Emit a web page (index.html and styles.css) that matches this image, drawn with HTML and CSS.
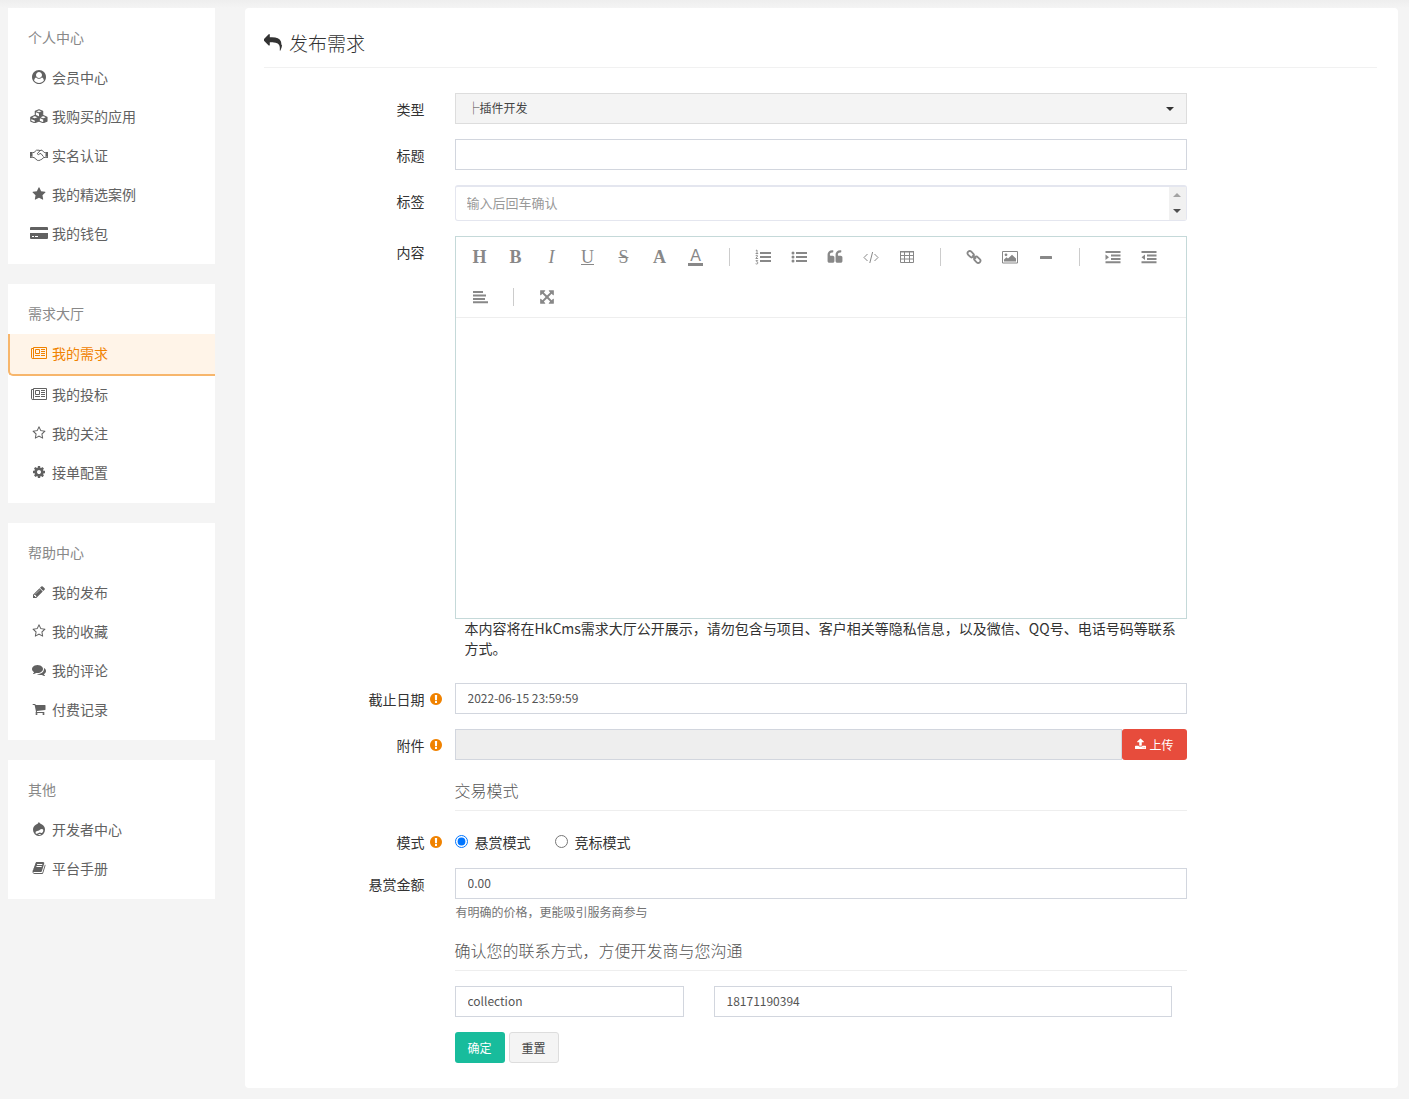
FILE: index.html
```html
<!DOCTYPE html>
<html lang="zh-CN">
<head>
<meta charset="utf-8">
<meta name="viewport" content="width=device-width, initial-scale=1">
<title>发布需求</title>
<link rel="stylesheet" href="styles.css">
</head>
<body>
<svg class="sprite" aria-hidden="true">
  <symbol id="i-user" viewBox="0 0 1792 1792"><path d="M1523 1339q-22-155-87.500-257.500t-184.500-118.500q-67 74-159.500 115.500t-195.500 41.500-195.500-41.500-159.500-115.500q-119 16-184.500 118.500t-87.500 257.500q106 150 271 237.500t356 87.500 356-87.500 271-237.500zm-243-699q0-159-112.500-271.500t-271.500-112.500-271.500 112.500-112.500 271.500 112.500 271.500 271.500 112.500 271.500-112.500 112.500-271.500zm512 256q0 182-71 347.500t-190.500 286-285.500 191.500-349 71-348-71-286-191-191-286-71-348 71-348 191-286 286-191 348-71 348 71 286 191 191 286 71 348z"/></symbol>
  <symbol id="i-cubes" viewBox="0 0 18 14"><g fill="none" stroke="currentColor" stroke-width="1.100" stroke-linejoin="round"><path d="M9 .7 12.700 2.300V6.200L9 7.900 5.300 6.200V2.300ZM5.300 2.300 9 4l3.700-1.700M4.700 6.600 8.600 8.300v3.900L4.700 13.700.8 12.200V8.300ZM.8 8.300 4.700 10l3.900-1.700M13.200 6.600 17 8.300v3.900l-3.800 1.500-3.900-1.500V8.300ZM9.300 8.300 13.200 10 17 8.300"/></g><path d="M9 4v3.900l3.700-1.700V2.300ZM4.700 10v3.700l3.900-1.500V8.300ZM13.200 10v3.700L17 12.200V8.300ZM.8 8.300 4.700 10v1.500L.8 10Z"/></symbol>
  <symbol id="i-hands" viewBox="0 0 18 14"><path d="M0 4h2.500v6H0ZM15.500 4H18v6h-2.500ZM.8 8.500v.8h.8v-.8ZM16.400 8.500v.8h.8v-.8Z" fill-rule="evenodd"/><path d="M2.500 4.500H4L6.500 2.200H9L10 2.700 11 2.200h1L14.200 4.500h1.300M10 2.700 7.200 5.800q.8 1.800 2.800-.2h1L13.500 8.700M2.500 9.500H4L7.300 12.300q.9.600 1.600 0 1.300.4 1.800-.6 1.300.1 1.500-1.100 1.200 0 1.300-1.100h2" fill="none" stroke="currentColor"/></symbol>
  <symbol id="i-star" viewBox="0 0 1792 1792"><path d="M1728 647q0 22-26 48l-363 354 86 500q1 7 1 20 0 21-10.500 35.500t-30.500 14.500q-19 0-40-12l-449-236-449 236q-22 12-40 12-21 0-31.500-14.500t-10.500-35.500q0-6 2-20l86-500-364-354q-25-27-25-48 0-37 56-46l502-73 225-455q19-41 49-41t49 41l225 455 502 73q56 9 56 46z"/></symbol>
  <symbol id="i-star-o" viewBox="0 0 1792 1792"><path d="M1201 1004l306-297-422-62-189-382-189 382-422 62 306 297-73 421 378-199 377 199zm527-357q0 22-26 48l-363 354 86 500q1 7 1 20 0 50-41 50-19 0-40-12l-449-236-449 236q-22 12-40 12-21 0-31.500-14.500t-10.500-35.500q0-6 2-20l86-500-364-354q-25-27-25-48 0-37 56-46l502-73 225-455q19-41 49-41t49 41l225 455 502 73q56 9 56 46z"/></symbol>
  <symbol id="i-card" viewBox="0 0 18 14"><path fill-rule="evenodd" d="M1 1h16q1 0 1 1v2H0V2q0-1 1-1ZM0 7h18v5q0 1-1 1H1q-1 0-1-1ZM2 10v1h2v-1ZM5 10v1h3v-1Z"/></symbol>
  <symbol id="i-news" viewBox="0 0 18 14"><path fill="none" stroke="currentColor" d="M3.500 1.500h13v11H2.700q-1.200 0-1.200-1.200V2.500h2M3.500 1.500v9.800q0 1-.9 1.200M5.500 3.500h4v4h-4ZM5 9.500h5M11 3.500h4M11 5.500h4M11 7.500h4M11 9.500h4"/></symbol>
  <symbol id="i-cog" viewBox="0 0 1792 1792"><path d="M1152 896q0-106-75-181t-181-75-181 75-75 181 75 181 181 75 181-75 75-181zm512-109v222q0 12-8 23t-20 13l-185 28q-19 54-39 91 35 50 107 138 10 12 10 25t-9 23q-27 37-99 108t-94 71q-12 0-26-9l-138-108q-44 23-91 38-16 136-29 186-7 28-36 28h-222q-14 0-24.500-8.500t-11.500-21.500l-28-184q-49-16-90-37l-141 107q-10 9-25 9-14 0-25-11-126-114-165-168-7-10-7-23 0-12 8-23 15-21 51-66.500t54-70.500q-27-50-41-99l-183-27q-13-2-21-12.500t-8-23.500v-222q0-12 8-23t19-13l186-28q14-46 39-92-40-57-107-138-10-12-10-24 0-10 9-23 26-36 98.500-107.500t94.500-71.500q13 0 26 10l138 107q44-23 91-38 16-136 29-186 7-28 36-28h222q14 0 24.500 8.500t11.500 21.500l28 184q49 16 90 37l142-107q9-9 24-9 13 0 25 10 129 119 165 170 7 8 7 22 0 12-8 23-15 21-51 66.500t-54 70.500q26 50 41 98l183 28q13 2 21 12.500t8 23.500z"/></symbol>
  <symbol id="i-pencil" viewBox="0 0 1792 1792"><path d="M491 1536l91-91-235-235-91 91v107h128v128h107zm523-928q0-22-22-22-10 0-17 7l-542 542q-7 7-7 17 0 22 22 22 10 0 17-7l542-542q7-7 7-17zm-54-192l416 416-832 832h-416v-416zm683 96q0 53-37 90l-166 166-416-416 166-165q36-38 90-38 53 0 91 38l235 234q37 39 37 91z"/></symbol>
  <symbol id="i-comments" viewBox="0 0 1792 1792"><path d="M1408 768q0 139-94 257t-256.500 186.500-353.500 68.500q-86 0-176-16-124 88-278 128-36 9-86 16h-3q-11 0-20.500-8t-11.500-21q-1-3-1-6.500t.5-6.500 2-6l2.500-5 3.500-5.500 4-5 4.500-5 4-4.500q5-6 23-25t26-29.500 22.500-29 25-38.500 20.500-44q-124-72-195-177t-71-224q0-139 94-257t256.500-186.500 353.500-68.500 353.500 68.500 256.500 186.500 94 257zm384 256q0 120-71 224.500t-195 176.500q10 24 20.500 44t25 38.500 22.500 29 26 29.500 23 25q1 1 4 4.500t4.500 5 4 5 3.500 5.500l2.500 5 2 6 .5 6.500-1 6.500q-3 14-13 22t-22 7q-50-7-86-16-154-40-278-128-90 16-176 16-271 0-472-132 58 4 88 4 161 0 309-45t264-129q125-92 192-212t67-254q0-77-23-152 129 71 204 178t75 230z"/></symbol>
  <symbol id="i-cart" viewBox="0 0 1792 1792"><path d="M704 1536q0 52-38 90t-90 38-90-38-38-90 38-90 90-38 90 38 38 90zm896 0q0 52-38 90t-90 38-90-38-38-90 38-90 90-38 90 38 38 90zm128-1088v512q0 24-16.500 42.500t-40.500 21.500l-1044 122q13 60 13 70 0 16-24 64h920q26 0 45 19t19 45-19 45-45 19h-1024q-26 0-45-19t-19-45q0-11 8-31.500t16-36 21.500-40 15.500-29.500l-177-823h-204q-26 0-45-19t-19-45 19-45 45-19h256q16 0 28.500 6.500t19.500 15.500 13 24.500 8 26 5.500 29.500 4.500 26h1201q26 0 45 19t19 45z"/></symbol>
  <symbol id="i-drupal" viewBox="0 0 14 14"><path d="M6.800 0Q8 1.500 10 2.600q3 1.700 3 5.200 0 2.700-1.800 4.400T7 14t-4.200-1.800T1 7.800Q1 4.400 4.200 2.600 6.400 1.500 6.800 0Z"/><path d="M3.600 11.200q-.6-2 1.400-2.300 1.300 0 2.300-.7 1.600-1.400 2.900-1.200 1.600.6 1 2.300-.8 2.300-2 1.700Q7.800 9.900 6.600 11q-2 1.500-3 .2ZM6 12.500q1.700-1.200 3.200 0-1.700 1-3.200 0Z" fill="#fff"/></symbol>
  <symbol id="i-book" viewBox="0 0 1792 1792"><path d="M1703 478q40 57 18 129l-275 906q-19 64-76.500 107.500t-122.500 43.500h-923q-77 0-148.500-53.500t-99.500-131.500q-24-67-2-127 0-4 3-27t4-37q1-8-3-21.500t-3-19.500q2-11 8-21t16.500-23.500 16.500-23.500q23-38 45-91.500t30-91.500q3-10 .5-30t-.5-28q3-11 17-28t17-23q21-36 42-92t25-90q1-9-2.500-32t.5-28q4-13 22-30.500t22-22.500q19-26 42.500-84.500t27.500-96.500q1-8-3-25.500t-2-26.500q2-8 9-18t18-23 17-21q8-12 16.500-30.500t15-35 16-36 19.500-32 26.500-23.500 36-11.500 47.500 5.500l-1 3q38-9 51-9h761q74 0 114 56t18 130l-274 906q-36 119-71.500 153.500t-128.500 34.500h-869q-27 0-38 15-11 16-1 43 24 70 144 70h923q29 0 56-15.500t35-41.500l300-987q7-22 5-57 38 15 59 43zm-1064 2q-4 13 2 22.500t20 9.500h608q13 0 25.500-9.500t16.500-22.500l21-64q4-13-2-22.500t-20-9.500h-608q-13 0-25.500 9.500t-16.500 22.500zm-83 256q-4 13 2 22.500t20 9.500h608q13 0 25.500-9.500t16.500-22.500l21-64q4-13-2-22.500t-20-9.500h-608q-13 0-25.500 9.500t-16.500 22.500z"/></symbol>
  <symbol id="i-reply" viewBox="0 0 1792 1792"><path d="M1792 1120q0 166-127 451-3 7-10.500 24t-13.500 30-13 22q-12 17-28 17-15 0-23.500-10t-8.500-25q0-9 2.500-26.500t2.500-23.500q5-68 5-123 0-112-19.500-200.500t-54-153.500-89-112-117-80-145.500-47-165.500-23.500-187.500-6.500h-224v256q0 26-19 45t-45 19-45-19l-512-512q-19-19-19-45t19-45l512-512q19-19 45-19t45 19 19 45v256h224q713 0 875 403 53 134 53 333z"/></symbol>
  <symbol id="i-alert" viewBox="0 0 1792 1792"><path d="M896 128q209 0 385.500 103t279.500 279.500 103 385.500-103 385.500-279.500 279.500-385.500 103-385.500-103-279.500-279.500-103-385.500 103-385.500 279.500-279.500 385.500-103zm128 1247v-190q0-14-9-23.500t-22-9.500h-192q-13 0-23 10t-10 23v190q0 13 10 23t23 10h192q13 0 22-9.500t9-23.500zm-2-344l18-621q0-12-10-18-10-8-24-8h-220q-14 0-24 8-10 6-10 18l17 621q0 10 10 17.500t24 7.500h185q14 0 23.500-7.500t10.500-17.500z"/></symbol>
  <symbol id="i-upload" viewBox="64 0 1664 1792"><path d="M1344 1472q0-26-19-45t-45-19-45 19-19 45 19 45 45 19 45-19 19-45zm256 0q0-26-19-45t-45-19-45 19-19 45 19 45 45 19 45-19 19-45zm128-224v320q0 40-28 68t-68 28h-1472q-40 0-68-28t-28-68v-320q0-40 28-68t68-28h427q21 56 70.500 92t110.500 36h256q61 0 110.500-36t70.500-92h427q40 0 68 28t28 68zm-325-648q-17 40-59 40h-256v448q0 26-19 45t-45 19h-256q-26 0-45-19t-19-45v-448h-256q-42 0-59-40-17-39 14-69l448-448q18-19 45-19t45 19l448 448q31 30 14 69z"/></symbol>
  <symbol id="i-ol" viewBox="0 0 16 16"><path d="M5 3h11v2H5ZM5 7h11v2H5ZM5 11h11v2H5Z"/><path fill="none" stroke="currentColor" stroke-width=".9" d="M.8 1.600 2 1v3.500M.6 4.500h2.600M.7 6.600q1.900-1 1.900.4L.8 9.500h2.300M.7 11.600h2L1.600 12.800q2 .5 1 1.900-.8.600-2 0"/></symbol>
  <symbol id="i-ul" viewBox="0 0 16 16"><path d="M5 3h11v2H5ZM5 7h11v2H5ZM5 11h11v2H5Z"/><circle cx="2" cy="4" r="1.500"/><circle cx="2" cy="8" r="1.500"/><circle cx="2" cy="12" r="1.500"/></symbol>
  <symbol id="i-quote" viewBox="0 0 1792 1792"><path d="M832 960v384q0 80-56 136t-136 56h-384q-80 0-136-56t-56-136v-704q0-104 40.500-198.500t109.500-163.500 163.500-109.500 198.500-40.500h64q26 0 45 19t19 45v128q0 26-19 45t-45 19h-64q-106 0-181 75t-75 181v32q0 40 28 68t68 28h224q80 0 136 56t56 136zm896 0v384q0 80-56 136t-136 56h-384q-80 0-136-56t-56-136v-704q0-104 40.500-198.500t109.500-163.500 163.500-109.500 198.500-40.500h64q26 0 45 19t19 45v128q0 26-19 45t-45 19h-64q-106 0-181 75t-75 181v32q0 40 28 68t68 28h224q80 0 136 56t56 136z"/></symbol>
  <symbol id="i-code" viewBox="0 0 16 16"><path fill="none" stroke="currentColor" d="M4.500 5 1 8.500 4.500 12M11.500 5 15 8.500 11.500 12M9.600 3 6.800 14"/></symbol>
  <symbol id="i-table" viewBox="0 0 16 16"><path fill="none" stroke="currentColor" d="M1.500 2.500h13v11h-13ZM1.500 6.500h13M1.500 10h13M5.500 3v11M10.500 3v11"/><path d="M1 2h14v1.500H1Z"/></symbol>
  <symbol id="i-link" viewBox="0 0 16 16"><g fill="none" stroke="currentColor" stroke-width="1.800"><rect x="1.200" y="3" width="7" height="4.400" rx="2.200" transform="rotate(45 4.700 5.200)"/><rect x="7.800" y="8.600" width="7" height="4.400" rx="2.200" transform="rotate(45 11.300 10.800)"/><path d="m6.300 6.300 3.600 3.500"/></g></symbol>
  <symbol id="i-image" viewBox="0 0 16 16"><path fill="none" stroke="currentColor" d="M.5 2.500h15v11.500H.5Z"/><circle cx="4" cy="5.800" r="1.400"/><path d="M2 12.500v-2l2.500-2.300 1.500 1.400 4-3.900 4 3.900v2.900Z"/></symbol>
  <symbol id="i-minus" viewBox="0 0 16 16"><path d="M2.500 7h11q.5 0 .5.500v2q0 .5-.5.500h-11q-.5 0-.5-.5v-2q0-.5.500-.5Z"/></symbol>
  <symbol id="i-indent" viewBox="0 0 16 16"><path d="M.5 2h15v2H.5ZM6 5.500h9.500v2H6ZM6 9h9.500v2H6ZM.5 12.200h15v2H.5ZM.5 5.500 4 8.200.5 11Z"/></symbol>
  <symbol id="i-outdent" viewBox="0 0 16 16"><path d="M.5 2h15v2H.5ZM6 5.500h9.500v2H6ZM6 9h9.500v2H6ZM.5 12.200h15v2H.5ZM4 5.500.5 8.200 4 11Z"/></symbol>
  <symbol id="i-align" viewBox="0 0 16 16"><path d="M1 2h10v2H1ZM1 5.500h13v2H1ZM1 9h12v2H1ZM1 12.200h15v2H1Z"/></symbol>
  <symbol id="i-expand" viewBox="0 0 1792 1792"><path d="M1411 541l-355 355 355 355 144-144q29-31 70-14 39 17 39 59v448q0 26-19 45t-45 19h-448q-42 0-59-40-17-39 14-69l144-144-355-355-355 355 144 144q31 30 14 69-17 40-59 40h-448q-26 0-45-19t-19-45v-448q0-42 40-59 39-17 69 14l144 144 355-355-355-355-144 144q-19 19-45 19-12 0-24-5-40-17-40-59v-448q0-26 19-45t45-19h448q42 0 59 40 17 39-14 69l-144 144 355 355 355-355-144-144q-31-30-14-69 17-40 59-40h448q26 0 45 19t19 45v448q0 42-39 59-13 5-25 5-26 0-45-19z"/></symbol>
</svg>

<div class="layout">
  <aside class="sidebar">
    <nav class="menu">
      <h2 class="menu-title">个人中心</h2>
      <a class="menu-link" href="#"><svg class="icon"><use href="#i-user"/></svg>会员中心</a>
      <a class="menu-link" href="#"><svg class="icon"><use href="#i-cubes"/></svg>我购买的应用</a>
      <a class="menu-link" href="#"><svg class="icon"><use href="#i-hands"/></svg>实名认证</a>
      <a class="menu-link" href="#"><svg class="icon"><use href="#i-star"/></svg>我的精选案例</a>
      <a class="menu-link" href="#"><svg class="icon"><use href="#i-card"/></svg>我的钱包</a>
    </nav>
    <nav class="menu">
      <h2 class="menu-title">需求大厅</h2>
      <a class="menu-link active" href="#"><svg class="icon"><use href="#i-news"/></svg>我的需求</a>
      <a class="menu-link" href="#"><svg class="icon"><use href="#i-news"/></svg>我的投标</a>
      <a class="menu-link" href="#"><svg class="icon"><use href="#i-star-o"/></svg>我的关注</a>
      <a class="menu-link" href="#"><svg class="icon"><use href="#i-cog"/></svg>接单配置</a>
    </nav>
    <nav class="menu">
      <h2 class="menu-title">帮助中心</h2>
      <a class="menu-link" href="#"><svg class="icon"><use href="#i-pencil"/></svg>我的发布</a>
      <a class="menu-link" href="#"><svg class="icon"><use href="#i-star-o"/></svg>我的收藏</a>
      <a class="menu-link" href="#"><svg class="icon"><use href="#i-comments"/></svg>我的评论</a>
      <a class="menu-link" href="#"><svg class="icon"><use href="#i-cart"/></svg>付费记录</a>
    </nav>
    <nav class="menu">
      <h2 class="menu-title">其他</h2>
      <a class="menu-link" href="#"><svg class="icon"><use href="#i-drupal"/></svg>开发者中心</a>
      <a class="menu-link" href="#"><svg class="icon"><use href="#i-book"/></svg>平台手册</a>
    </nav>
  </aside>

  <main class="panel">
    <h1 class="page-title"><a class="back" href="#" aria-label="返回"><svg class="back-icon"><use href="#i-reply"/></svg></a>发布需求</h1>
    <form class="form">
      <div class="group">
        <label class="label" for="type">类型</label>
        <div class="field select-wrap"><select class="control select" id="type"><option>├插件开发</option></select></div>
      </div>
      <div class="group">
        <label class="label" for="title">标题</label>
        <div class="field"><input class="control" id="title" type="text"></div>
      </div>
      <div class="group">
        <label class="label" for="tags">标签</label>
        <div class="field tags">
          <input class="tags-input" id="tags" type="text" placeholder="输入后回车确认">
          <div class="scroll"><span class="arrow up"></span><span class="arrow down"></span></div>
        </div>
      </div>
      <div class="group">
        <label class="label" for="content">内容</label>
        <div class="field">
          <div class="editor">
            <div class="toolbar">
              <button type="button" class="tool bold">H</button>
              <button type="button" class="tool bold">B</button>
              <button type="button" class="tool italic">I</button>
              <button type="button" class="tool underline">U</button>
              <button type="button" class="tool strike">S</button>
              <button type="button" class="tool bold">A</button>
              <button type="button" class="tool"><span class="color-a">A</span></button>
              <span class="sep"></span>
              <button type="button" class="tool" aria-label="有序列表"><svg class="tool-icon"><use href="#i-ol"/></svg></button>
              <button type="button" class="tool" aria-label="无序列表"><svg class="tool-icon"><use href="#i-ul"/></svg></button>
              <button type="button" class="tool" aria-label="引用"><svg class="tool-icon"><use href="#i-quote"/></svg></button>
              <button type="button" class="tool" aria-label="代码"><svg class="tool-icon"><use href="#i-code"/></svg></button>
              <button type="button" class="tool" aria-label="表格"><svg class="tool-icon"><use href="#i-table"/></svg></button>
              <span class="sep"></span>
              <button type="button" class="tool" aria-label="链接"><svg class="tool-icon"><use href="#i-link"/></svg></button>
              <button type="button" class="tool" aria-label="图片"><svg class="tool-icon"><use href="#i-image"/></svg></button>
              <button type="button" class="tool" aria-label="分隔线"><svg class="tool-icon"><use href="#i-minus"/></svg></button>
              <span class="sep"></span>
              <button type="button" class="tool" aria-label="增加缩进"><svg class="tool-icon"><use href="#i-indent"/></svg></button>
              <button type="button" class="tool" aria-label="减少缩进"><svg class="tool-icon"><use href="#i-outdent"/></svg></button>
              <button type="button" class="tool" aria-label="对齐"><svg class="tool-icon"><use href="#i-align"/></svg></button>
              <span class="sep"></span>
              <button type="button" class="tool" aria-label="全屏"><svg class="tool-icon"><use href="#i-expand"/></svg></button>
            </div>
            <textarea class="editor-body" id="content"></textarea>
          </div>
          <p class="note">本内容将在HkCms需求大厅公开展示，请勿包含与项目、客户相关等隐私信息，以及微信、QQ号、电话号码等联系方式。</p>
        </div>
      </div>
      <div class="group">
        <label class="label has-tip" for="deadline">截止日期<svg class="tip"><use href="#i-alert"/></svg></label>
        <div class="field"><input class="control" id="deadline" type="text" value="2022-06-15 23:59:59"></div>
      </div>
      <div class="group">
        <label class="label has-tip" for="file">附件<svg class="tip"><use href="#i-alert"/></svg></label>
        <div class="field upload">
          <input class="control" id="file" type="text" disabled>
          <button type="button" class="btn btn-danger"><svg class="btn-icon"><use href="#i-upload"/></svg>上传</button>
        </div>
      </div>
      <div class="group"><h3 class="field section">交易模式</h3></div>
      <div class="group">
        <span class="label has-tip" id="mode-label">模式<svg class="tip"><use href="#i-alert"/></svg></span>
        <div class="field radios" role="radiogroup" aria-labelledby="mode-label">
          <label class="radio"><input type="radio" name="mode" checked>悬赏模式</label>
          <label class="radio"><input type="radio" name="mode">竞标模式</label>
        </div>
      </div>
      <div class="group">
        <label class="label" for="amount">悬赏金额</label>
        <div class="field">
          <input class="control" id="amount" type="text" value="0.00">
          <p class="help">有明确的价格，更能吸引服务商参与</p>
        </div>
      </div>
      <div class="group"><h3 class="field section">确认您的联系方式，方便开发商与您沟通</h3></div>
      <div class="group">
        <div class="field contact">
          <input class="control" type="text" value="collection" aria-label="联系人">
          <input class="control" type="text" value="18171190394" aria-label="电话">
        </div>
      </div>
      <div class="group">
        <div class="field actions">
          <button type="submit" class="btn btn-success">确定</button>
          <button type="reset" class="btn btn-default">重置</button>
        </div>
      </div>
    </form>
  </main>
</div>
</body>
</html>
```
FILE: styles.css
```css
* { box-sizing: border-box; }

body {
  margin: 0;
  background: #f4f4f4 linear-gradient(#eeeeee, #f4f4f4) no-repeat 0 0 / 100% 8px;
  color: #333;
  font: 14px/20px "Noto Sans CJK SC", sans-serif;
}

h1, h2, h3, p { margin: 0; font-weight: 400; }
input, select, textarea, button { font-family: inherit; }
svg { fill: currentColor; }
.sprite { display: none; }

.layout {
  display: flex;
  align-items: flex-start;
  gap: 30px;
  padding: 8px 11px 11px 8px;
}

/* Sidebar */
.sidebar {
  flex: 0 0 207px;
  display: flex;
  flex-direction: column;
  gap: 20px;
}
.menu { padding: 19px 0 11px; background: #fff; }
.menu-title {
  padding: 0 20px;
  margin-bottom: 11px;
  color: #888;
  font-size: 14px;
  line-height: 20px;
}
.menu-link {
  display: flex;
  align-items: center;
  gap: 4px;
  height: 39px;
  padding: 0 0 1px 22px;
  color: #616161;
  text-decoration: none;
}
.menu-link.active {
  height: 42px;
  padding: 0 0 2px 20px;
  margin-bottom: -1px;
  border: 2px solid #f7b66c;
  border-width: 0 0 2px 2px;
  border-radius: 0 0 0 5px;
  background: #fff4e8;
  color: #f08200;
}
.icon { width: 18px; height: 14px; }

/* Main panel */
.panel {
  flex: 1;
  min-width: 0;
  padding: 20px 21px 10px 19px;
  border-radius: 4px;
  background: #fff;
}
.page-title {
  display: flex;
  align-items: center;
  gap: 7px;
  height: 40px;
  padding-bottom: 9px;
  margin-bottom: 25px;
  border-bottom: 1px solid #f1f1f1;
  font-size: 19px;
  font-weight: 300;
}
.back { display: flex; color: #333; }
.back-icon { width: 18px; height: 18px; }

.form { margin: 0 -15px; }
.group {
  display: grid;
  grid-template-columns: minmax(0, 2fr) minmax(0, 8fr) minmax(0, 2fr);
  align-items: start;
  margin-bottom: 15px;
}
.label { padding: 6px 15px 1px 0; text-align: right; }
.has-tip {
  display: flex;
  justify-content: flex-end;
  align-items: center;
  gap: 4px;
  padding-right: 0;
  margin-right: -3px;
}
.tip { width: 14px; height: 14px; color: #f08200; }
.field { grid-column: 2; margin: 0 15px; min-width: 0; }

.control {
  display: block;
  width: 100%;
  height: 31px;
  padding: 0 12px 2px;
  border: 1px solid #d2d6de;
  border-radius: 0;
  background: #fff;
  color: #555;
  font-size: 12px;
}
.control:disabled { background: #eee; }

.select-wrap { position: relative; }
.select {
  appearance: none;
  border-color: #ddd;
  background: #f4f4f4;
  color: #444;
}
.select-wrap::after {
  content: "";
  position: absolute;
  top: 14px;
  right: 13px;
  border: 4px solid transparent;
  border-top-color: #333;
  border-bottom: 0;
}

.tags {
  display: flex;
  height: 36px;
  border: 1px solid #e4e6ef;
  border-top-width: 2px;
  border-radius: 3px;
}
.tags-input {
  flex: 1;
  min-width: 0;
  padding: 0 11px 3px;
  border: 0;
  background: none;
  font-size: 13px;
}
.tags-input::placeholder { color: #999; }
.scroll {
  display: flex;
  flex-direction: column;
  justify-content: space-between;
  align-items: center;
  width: 17px;
  padding: 6px 0 7px;
  background: #f1f1f1;
}
.arrow { border: 4px solid transparent; }
.up { border-top: 0; border-bottom-color: #a3a3a3; }
.down { border-bottom: 0; border-top-color: #505050; }

.editor { border: 1px solid #c5d9d9; }
.toolbar {
  display: flex;
  flex-wrap: wrap;
  align-items: center;
  padding: 0 6px;
  border-bottom: 1px solid #eee;
}
.tool {
  display: flex;
  align-items: center;
  justify-content: center;
  width: 36px;
  height: 40px;
  padding: 0;
  border: 0;
  background: none;
  color: #888;
  font: 18px/20px "Liberation Serif", serif;
}
.bold { font-weight: 700; }
.italic { font-style: italic; }
.underline { text-decoration: underline; }
.strike { text-decoration: line-through; }
.color-a {
  width: 15px;
  border-bottom: 3px solid #888;
  font: 16px/14px "Liberation Sans", sans-serif;
}
.tool-icon { width: 16px; height: 16px; }
.sep { width: 1px; height: 18px; margin: 0 15px; background: #ccc; }
.editor-body {
  display: block;
  width: 100%;
  height: 300px;
  padding: 10px;
  border: 0;
  resize: none;
}
.note { padding: 0 10px; margin: -1px 0 10px; }

.upload { display: flex; }
.upload .control { flex: 1; min-width: 0; }

.section {
  padding: 5px 0 10px;
  border-bottom: 1px solid #eee;
  color: #555;
  font-size: 16px;
  font-weight: 300;
  line-height: 20px;
}

.radios { display: flex; gap: 24px; padding: 6px 0 1px; }
.radio { display: flex; align-items: center; gap: 7px; }
.radio input { width: 13px; height: 13px; margin: 0 0 1px; }

.help {
  padding: 0 1px;
  margin-top: 5px;
  color: #737373;
  font-size: 12px;
  line-height: 16px;
}

.contact {
  display: grid;
  grid-template-columns: minmax(0, 4fr) minmax(0, 8fr);
  margin-right: 0;
  padding-right: 15px;
}
.contact .control { width: auto; margin-right: 15px; }
.contact .control + .control { margin: 0 15px; }

.actions { display: flex; gap: 4px; }
.btn {
  display: flex;
  align-items: center;
  gap: 3px;
  height: 31px;
  padding: 0 12px 1px;
  border: 1px solid transparent;
  border-radius: 3px;
  font-size: 12px;
  white-space: nowrap;
}
.btn-icon { width: 11px; height: 12px; }
.btn-danger { background: #e74c3c; color: #fff; }
.btn-success { background: #18bc9c; color: #fff; }
.btn-default { border-color: #ddd; background: #f4f4f4; color: #444; }
```
